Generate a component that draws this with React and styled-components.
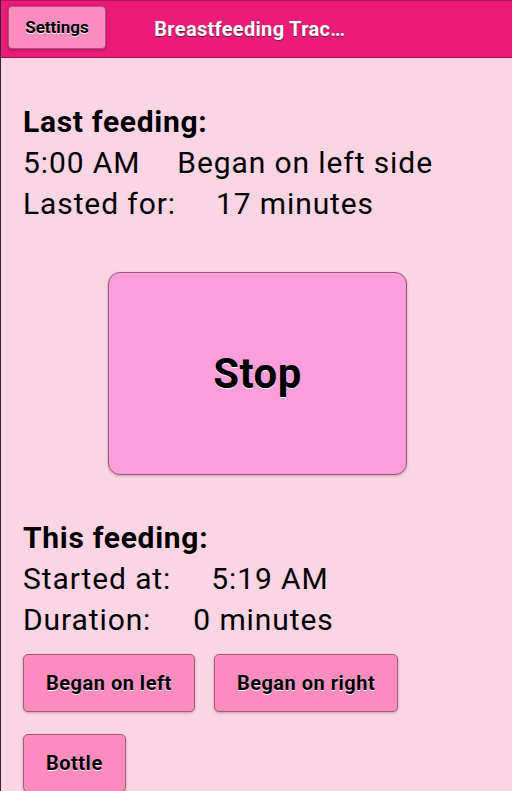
import React from 'react';
import styled, { createGlobalStyle } from 'styled-components';

const GlobalStyle = createGlobalStyle`
  html, body {
    margin: 0;
    padding: 0;
    background: #fbd5e4;
  }
  body {
    font-family: Roboto, "Noto Sans", sans-serif;
  }
  * {
    box-sizing: border-box;
  }
`;

const Page = styled.div`
  min-height: 100vh;
  background: #fbd5e4;
  border-left: 1px solid #2e2a2c;
`;

const Header = styled.header`
  display: grid;
  grid-template-columns: 30% 40% 30%;
  align-items: center;
  height: 58px;
  background: #ec1a78;
  border-top: 1px solid #a8195a;
  border-bottom: 1px solid #9e1552;
`;

const HeaderButton = styled.button`
  justify-self: start;
  margin-left: 7px;
  margin-top: -4px;
  width: 98px;
  height: 43px;
  padding: 0;
  background: #fb8cbf;
  border: 1px solid #a35a7c;
  border-radius: 4px;
  box-shadow: 0 1px 3px rgba(0, 0, 0, 0.3);
  font-family: Roboto, sans-serif;
  font-size: 17px;
  font-weight: 700;
  color: #000;
  text-shadow: 0 1px 0 #f4f4f4;
`;

const Title = styled.h1`
  margin: 0;
  max-width: 199px;
  white-space: nowrap;
  overflow: hidden;
  text-overflow: ellipsis;
  font-size: 20px;
  font-weight: 700;
  letter-spacing: 0.3px;
  color: #fff;
  text-shadow: 0 1px 1px #5a2238;
`;

const Content = styled.main`
  padding: 43px 22px 0;
`;

const Section = styled.section`
  font-size: 30px;
  line-height: 41px;
  letter-spacing: 0.9px;
  color: #000;
`;

const Heading = styled.h2`
  margin: 0;
  font-size: 30px;
  line-height: 41px;
  font-weight: 700;
  letter-spacing: 0.7px;
`;

const Line = styled.div`
  white-space: nowrap;
`;

const Value = styled.span`
  margin-left: ${p => p.$gap}px;
`;

const StopWrap = styled.div`
  display: flex;
  justify-content: center;
  padding: 48px 0 42px;
`;

const StopButton = styled.button`
  width: 299px;
  height: 203px;
  margin-left: 2px;
  background: #fb9edb;
  border: 1px solid #94587a;
  border-radius: 12px;
  box-shadow: 0 1px 3px rgba(0, 0, 0, 0.25);
  font-family: Roboto, sans-serif;
  font-size: 42px;
  font-weight: 700;
  letter-spacing: 0.4px;
  color: #000;
  text-shadow: 0 1px 0 #f2f2f2;
`;

const ButtonRow = styled.div`
  display: flex;
  flex-wrap: wrap;
  column-gap: 19px;
  row-gap: 22px;
  margin-top: 14px;
`;

const SideButton = styled.button`
  height: 58px;
  padding: 0 22px;
  background: #fb8cbf;
  border: 1px solid #a35a7c;
  border-radius: 5px;
  box-shadow: 0 1px 3px rgba(0, 0, 0, 0.25);
  font-family: Roboto, sans-serif;
  font-size: 20px;
  font-weight: 700;
  letter-spacing: 0.5px;
  color: #000;
  text-shadow: 0 1px 0 #f2f2f2;
`;

export default function App() {
  return (
    <>
      <GlobalStyle />
      <Page>
        <Header>
          <HeaderButton>Settings</HeaderButton>
          <Title>Breastfeeding Tracker</Title>
        </Header>
        <Content>
          <Section>
            <Heading>Last feeding:</Heading>
            <Line>5:00 AM<Value $gap={37}>Began on left side</Value></Line>
            <Line>Lasted for:<Value $gap={40}>17 minutes</Value></Line>
          </Section>
          <StopWrap>
            <StopButton>Stop</StopButton>
          </StopWrap>
          <Section>
            <Heading>This feeding:</Heading>
            <Line>Started at:<Value $gap={40}>5:19 AM</Value></Line>
            <Line>Duration:<Value $gap={42}>0 minutes</Value></Line>
          </Section>
          <ButtonRow>
            <SideButton>Began on left</SideButton>
            <SideButton>Began on right</SideButton>
            <SideButton>Bottle</SideButton>
          </ButtonRow>
        </Content>
      </Page>
    </>
  );
}
